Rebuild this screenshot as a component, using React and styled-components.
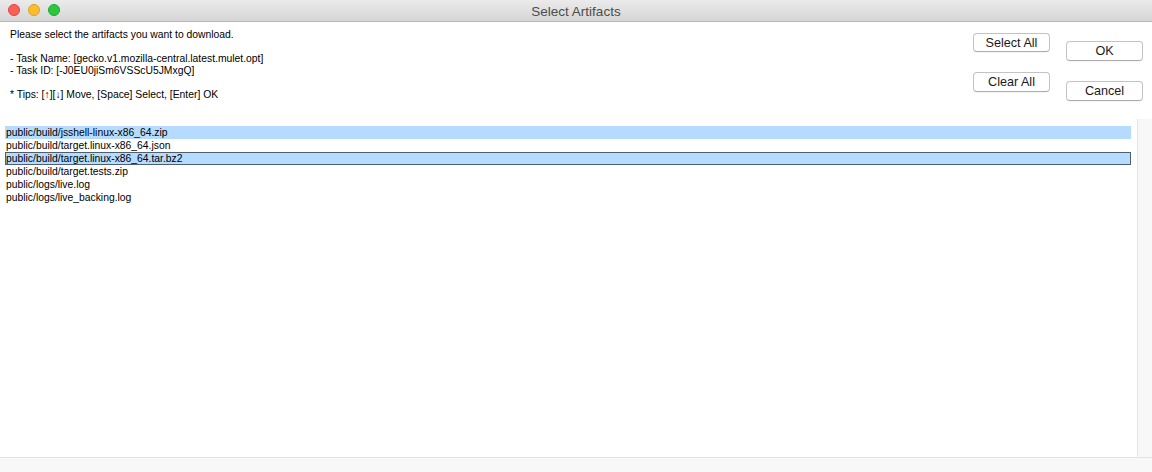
import React, { useState } from "react";
import styled, { createGlobalStyle } from "styled-components";

const GlobalStyle = createGlobalStyle`
  html, body {
    margin: 0;
    padding: 0;
    background: #ffffff;
  }
  body {
    font-family: "Liberation Sans", Arial, sans-serif;
  }
`;

const Window = styled.div`
  display: flex;
  flex-direction: column;
  width: 1152px;
  height: 472px;
  background: #ffffff;
  overflow: hidden;
`;

const TitleBar = styled.div`
  position: relative;
  display: flex;
  align-items: center;
  justify-content: center;
  height: 21px;
  flex-shrink: 0;
  background: linear-gradient(#ebebeb, #d5d5d5);
  border-bottom: 1px solid #b9b9b9;

  .title {
    font-size: 13.5px;
    color: #4d4d4d;
    margin-top: 1px;
  }
`;

const Lights = styled.div`
  position: absolute;
  left: 8px;
  top: 4px;
  display: flex;
  gap: 8px;
`;

const Light = styled.span`
  width: 12px;
  height: 12px;
  box-sizing: border-box;
  border-radius: 50%;
  background: ${(props) => props.color};
  border: 0.5px solid ${(props) => props.edge};
`;

const Header = styled.div`
  display: flex;
  height: 97px;
  flex-shrink: 0;
  padding-right: 9px;
`;

const Intro = styled.div`
  flex: 1;
  padding: 7px 0 0 10px;
  font-size: 10.35px;
  line-height: 12px;
  color: #000000;

  p {
    margin: 0;
    min-height: 12px;
  }
`;

const ButtonColumn = styled.div`
  display: flex;
  flex-direction: column;
  gap: 20px;
  padding-top: ${(props) => props.top}px;
  margin-left: ${(props) => props.left}px;
`;

const Button = styled.button`
  width: ${(props) => props.w}px;
  height: ${(props) => props.h}px;
  padding: 0;
  background: #ffffff;
  border: 1px solid #c3c3c3;
  border-bottom-color: #adadad;
  border-radius: 4px;
  font-family: "Liberation Sans", Arial, sans-serif;
  font-size: 12.6px;
  color: #1a1a1a;
  cursor: pointer;
  box-shadow: 0 0.5px 0.5px rgba(0, 0, 0, 0.08);
`;

const Body = styled.div`
  display: flex;
  flex: 1;
  min-height: 0;
`;

const List = styled.div`
  flex: 1;
  padding: 7px 6px 0 5px;
`;

const Row = styled.div`
  height: 13px;
  box-sizing: border-box;
  padding-left: ${(props) => (props.focused ? 0 : 1)}px;
  font-size: 10.35px;
  line-height: ${(props) => (props.focused ? 11 : 13)}px;
  color: #000000;
  white-space: nowrap;
  background: ${(props) => (props.selected ? "#b5dbfe" : "transparent")};
  border: ${(props) => (props.focused ? "1px solid #4f5f72" : "none")};
  cursor: default;
`;

const Scrollbar = styled.div`
  width: 14px;
  background: #f8f8f8;
  border-left: 1px solid #e6e6e6;
`;

const StatusBar = styled.div`
  height: 14px;
  flex-shrink: 0;
  background: #f8f8f8;
  border-top: 1px solid #e3e3e3;
`;

const artifacts = [
  "public/build/jsshell-linux-x86_64.zip",
  "public/build/target.linux-x86_64.json",
  "public/build/target.linux-x86_64.tar.bz2",
  "public/build/target.tests.zip",
  "public/logs/live.log",
  "public/logs/live_backing.log",
];

const App = () => {
  const [selected, setSelected] = useState([0, 2]);
  const [focus, setFocus] = useState(2);

  const toggle = (i) => {
    setFocus(i);
    setSelected(
      selected.includes(i) ? selected.filter((s) => s !== i) : [...selected, i]
    );
  };

  return (
    <Window>
      <GlobalStyle />
      <TitleBar>
        <Lights>
          <Light color="#fc5f57" edge="#e0443e" />
          <Light color="#fdbc2e" edge="#dea123" />
          <Light color="#28c840" edge="#1aab29" />
        </Lights>
        <span className="title">Select Artifacts</span>
      </TitleBar>
      <Header>
        <Intro>
          <p>Please select the artifacts you want to download.</p>
          <p />
          <p>- Task Name: [gecko.v1.mozilla-central.latest.mulet.opt]</p>
          <p>- Task ID: [-J0EU0jiSm6VSScU5JMxgQ]</p>
          <p />
          <p>* Tips: [↑][↓] Move, [Space] Select, [Enter] OK</p>
        </Intro>
        <ButtonColumn top={11} left={0}>
          <Button w={77} h={19} onClick={() => setSelected(artifacts.map((_, i) => i))}>
            Select All
          </Button>
          <Button w={77} h={20} onClick={() => setSelected([])}>
            Clear All
          </Button>
        </ButtonColumn>
        <ButtonColumn top={19} left={16}>
          <Button w={77} h={20}>OK</Button>
          <Button w={77} h={20}>Cancel</Button>
        </ButtonColumn>
      </Header>
      <Body>
        <List>
          {artifacts.map((name, i) => (
            <Row
              key={name}
              selected={selected.includes(i)}
              focused={focus === i}
              onClick={() => toggle(i)}
            >
              {name}
            </Row>
          ))}
        </List>
        <Scrollbar />
      </Body>
      <StatusBar />
    </Window>
  );
};

export default App;
